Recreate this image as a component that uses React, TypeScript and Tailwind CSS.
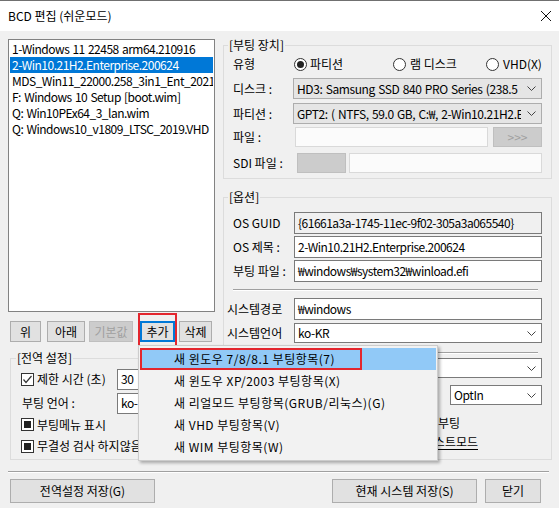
import React from "react";

const entries = [
  "1-Windows 11 22458 arm64.210916",
  "2-Win10.21H2.Enterprise.200624",
  "MDS_Win11_22000.258_3in1_Ent_2021.10.14",
  "F: Windows 10 Setup [boot.wim]",
  "Q: Win10PEx64_3_lan.wim",
  "Q: Windows10_v1809_LTSC_2019.VHD",
];

const menuItems = [
  "새 윈도우 7/8/8.1 부팅항목(7)",
  "새 윈도우 XP/2003 부팅항목(X)",
  "새 리얼모드 부팅항목(GRUB/리눅스)(G)",
  "새 VHD 부팅항목(V)",
  "새 WIM 부팅항목(W)",
];

function Chevron() {
  return (
    <svg width="9" height="5" viewBox="0 0 9 5" className="shrink-0">
      <polyline points="0.5,0.5 4.5,4.5 8.5,0.5" fill="none" stroke="#444" strokeWidth="1" />
    </svg>
  );
}

function Btn({
  children,
  className = "",
  disabled,
  focused,
}: {
  children: React.ReactNode;
  className?: string;
  disabled?: boolean;
  focused?: boolean;
}) {
  const look = disabled
    ? "bg-[#cccccc] border border-[#bfbfbf] text-[#a0a0a0]"
    : focused
      ? "bg-[#e1e1e1] border-2 border-[#0078d7] text-black"
      : "bg-[#e1e1e1] border border-[#adadad] text-black";
  return (
    <div className={`flex shrink-0 items-center justify-center text-[12px] ${look} ${className}`}>
      {children}
    </div>
  );
}

function TextBox({
  value = "",
  className = "",
  readOnly,
}: {
  value?: string;
  className?: string;
  readOnly?: boolean;
}) {
  return (
    <div
      className={`flex min-w-0 items-center overflow-hidden whitespace-nowrap border border-[#7a7a7a] pl-[3px] text-[12px] tracking-[-0.5px] [word-spacing:1px] ${
        readOnly ? "bg-[#f0f0f0]" : "bg-white"
      } ${className}`}
    >
      {value}
    </div>
  );
}

function Combo({
  value,
  className = "",
  gray,
}: {
  value: string;
  className?: string;
  gray?: boolean;
}) {
  return (
    <div
      className={`flex min-w-0 items-center border text-[12px] ${
        gray ? "border-[#adadad] bg-[#e5e5e5]" : "border-[#7a7a7a] bg-white"
      } ${className}`}
    >
      <div className="min-w-0 flex-1 overflow-hidden whitespace-nowrap pl-[3px] tracking-[-0.4px] [word-spacing:1px]">
        {value}
      </div>
      <div className="flex w-[20px] shrink-0 justify-center">
        <Chevron />
      </div>
    </div>
  );
}

function Check({ mode }: { mode: "checked" | "filled" | "empty" }) {
  return (
    <div className="flex h-[13px] w-[13px] shrink-0 items-center justify-center border border-[#333333] bg-white">
      {mode === "checked" && (
        <svg width="11" height="11" viewBox="0 0 11 11">
          <polyline points="1.5,5.5 4,8.5 9.5,2" fill="none" stroke="#333" strokeWidth="1.2" />
        </svg>
      )}
      {mode === "filled" && <div className="h-[7px] w-[7px] bg-[#222222]" />}
    </div>
  );
}

function Radio({ on }: { on?: boolean }) {
  return (
    <div className="flex h-[13px] w-[13px] shrink-0 items-center justify-center rounded-full border border-[#333333] bg-white">
      {on && <div className="h-[7px] w-[7px] rounded-full bg-[#222222]" />}
    </div>
  );
}

function Sep({ className = "" }: { className?: string }) {
  return <div className={`h-[2px] border-t border-b border-t-[#a0a0a0] border-b-white ${className}`} />;
}

export default function App() {
  return (
    <div className="relative h-[508px] w-[559px] overflow-hidden bg-[#f0f0f0] font-['Noto_Sans_CJK_KR','Noto_Sans',sans-serif] text-[12px] leading-[16px] text-black">
      {/* title bar */}
      <div className="flex h-[31px] items-center justify-between border-t border-[#707070] bg-white pl-[8px] pr-[7px]">
        <span className="text-[12px]">BCD 편집 (쉬운모드)</span>
        <svg width="12" height="12" viewBox="0 0 12 12">
          <path d="M1 1 L11 11 M11 1 L1 11" stroke="#111" strokeWidth="1" />
        </svg>
      </div>

      <div className="flex px-[8px]">
        {/* left column */}
        <div className="w-[207px] shrink-0 pt-[8px]">
          <div className="h-[273px] border border-[#828282] bg-white p-px">
            {entries.map((e, i) => (
              <div
                key={e}
                className={`h-[16px] overflow-hidden whitespace-nowrap pl-[2px] leading-[16px] tracking-[-0.5px] [word-spacing:1px] ${
                  i === 1 ? "bg-[#0078d7] text-white" : ""
                }`}
              >
                {e}
              </div>
            ))}
          </div>

          <div className="mt-[9px] flex h-[21px] pl-[2px]">
            <Btn className="w-[31px]">위</Btn>
            <Btn className="ml-[6px] w-[38px]">아래</Btn>
            <Btn className="ml-[4px] w-[44px]" disabled>
              기본값
            </Btn>
            <Btn className="ml-[7px] w-[35px]" focused>
              추가
            </Btn>
            <Btn className="ml-[4px] w-[33px]">삭제</Btn>
          </div>

          <fieldset className="ml-[2px] mt-[8px] w-[205px] min-w-0 border border-[#dcdcdc] pb-[2px] pl-[10px]">
            <legend className="-ml-[5px] px-[1px] leading-[16px]">[전역 설정]</legend>
            <div className="mt-[2px] flex h-[22px] items-center">
              <Check mode="checked" />
              <span className="ml-[3px] whitespace-nowrap">제한 시간 (초)</span>
              <TextBox value="30" className="ml-auto h-[21px] w-[97px]" />
            </div>
            <div className="mt-[2px] flex h-[22px] items-center">
              <span className="ml-[1px] whitespace-nowrap">부팅 언어 :</span>
              <TextBox value="ko-KR" className="ml-auto h-[21px] w-[97px]" />
            </div>
            <div className="flex h-[21px] items-center">
              <Check mode="filled" />
              <span className="ml-[3px]">부팅메뉴 표시</span>
            </div>
            <div className="flex h-[22px] items-center">
              <Check mode="filled" />
              <span className="ml-[3px] whitespace-nowrap">무결성 검사 하지않음</span>
            </div>
          </fieldset>
        </div>

        {/* right column */}
        <div className="ml-[8px] w-[329px] shrink-0 pt-[6px]">
          <fieldset className="min-w-0 border border-[#dcdcdc] pb-[5px] pl-[9px] pr-[9px]">
            <legend className="-ml-[5px] px-[1px] leading-[16px]">[부팅 장치]</legend>
            <div className="mt-[1px] flex h-[20px] items-center">
              <span className="w-[61px]">유형</span>
              <Radio on />
              <span className="ml-[3px] w-[83px]">파티션</span>
              <Radio />
              <span className="ml-[4px] w-[76px]">램 디스크</span>
              <Radio />
              <span className="ml-[4px]">VHD(X)</span>
            </div>
            <div className="mt-[4px] flex h-[21px] items-center">
              <span className="w-[60px] shrink-0">디스크 :</span>
              <Combo gray value="HD3: Samsung SSD 840 PRO Series (238.5 GB, GPT)" className="h-[21px] flex-1" />
            </div>
            <div className="mt-[4px] flex h-[21px] items-center">
              <span className="w-[60px] shrink-0">파티션 :</span>
              <Combo
                gray
                value="GPT2: ( NTFS,  59.0 GB, C:₩, 2-Win10.21H2.Enterprise.200624 )"
                className="h-[21px] flex-1"
              />
            </div>
            <div className="mt-[3px] flex h-[20px] items-center">
              <span className="w-[62px] shrink-0">파일 :</span>
              <div className="h-[20px] min-w-0 flex-1 border border-[#d9d9d9] bg-[#fbfbfb]" />
              <Btn disabled className="ml-[5px] h-[20px] w-[49px]">
                &gt;&gt;&gt;
              </Btn>
            </div>
            <div className="mt-[6px] flex h-[20px] items-center">
              <span className="w-[64px] shrink-0 whitespace-nowrap">SDI 파일 :</span>
              <div className="h-[20px] w-[49px] shrink-0 border border-[#bfbfbf] bg-[#cccccc]" />
              <div className="ml-[3px] h-[20px] min-w-0 flex-1 border border-[#d9d9d9] bg-[#fbfbfb]" />
            </div>
          </fieldset>

          <fieldset className="mt-[10px] min-w-0 border border-[#dcdcdc] pb-[8px] pl-[9px] pr-[9px]">
            <legend className="-ml-[5px] px-[1px] leading-[16px]">[옵션]</legend>
            <div className="mt-[7px] flex h-[22px] items-center">
              <span className="w-[61px] shrink-0">OS GUID</span>
              <TextBox readOnly value="{61661a3a-1745-11ec-9f02-305a3a065540}" className="h-[22px] flex-1" />
            </div>
            <div className="mt-[2px] flex h-[22px] items-center">
              <span className="w-[61px] shrink-0">OS 제목 :</span>
              <TextBox value="2-Win10.21H2.Enterprise.200624" className="h-[22px] flex-1" />
            </div>
            <div className="mt-[2px] flex h-[22px] items-center">
              <span className="w-[61px] shrink-0 whitespace-nowrap">부팅 파일 :</span>
              <TextBox value="₩windows₩system32₩winload.efi" className="h-[22px] flex-1" />
            </div>
            <Sep className="mr-[4px] mt-[7px]" />
            <div className="-ml-[6px] mt-[7px] flex h-[22px] items-center">
              <span className="w-[67px] shrink-0">시스템경로</span>
              <TextBox value="₩windows" className="h-[22px] flex-1" />
            </div>
            <div className="-ml-[6px] mt-[3px] flex h-[20px] items-center">
              <span className="w-[67px] shrink-0">시스템언어</span>
              <Combo value="ko-KR" className="h-[20px] flex-1" />
            </div>
            <Sep className="mr-[4px] mt-[9px]" />
            <div className="mt-[4px] flex h-[20px] items-center">
              <span className="w-[61px] shrink-0">부팅 방식</span>
              <Combo value="" className="h-[20px] flex-1" />
            </div>
            <div className="mt-[7px] flex h-[20px] items-center">
              <span>DEP 설정 (NX)</span>
              <Combo value="OptIn" className="ml-auto h-[20px] w-[92px] shrink-0" />
            </div>
            <div className="mt-[9px] flex h-[18px] w-[227px] items-center justify-between">
              <Check mode="empty" />
              <span>안전모드로 부팅</span>
            </div>
            <div className="mt-[1px] flex h-[18px] w-[245px] items-center justify-between">
              <Check mode="empty" />
              <span className="underline underline-offset-2">테스트모드</span>
            </div>
          </fieldset>
        </div>
      </div>

      {/* bottom */}
      <Sep className="mx-[8px] mt-[11px] w-[541px]" />
      <div className="mt-[6px] flex h-[24px] pl-[10px] pr-[18px]">
        <Btn className="w-[145px]">전역설정 저장(G)</Btn>
        <Btn className="ml-auto w-[145px]">현재 시스템 저장(S)</Btn>
        <Btn className="ml-[8px] w-[56px]">닫기</Btn>
      </div>

      {/* annotation around the add button */}
      <div className="absolute left-[138px] top-[313px] h-[34px] w-[39px] border-2 border-[#e3262e]" />

      {/* context menu */}
      <div className="absolute left-[138px] top-[345px] h-[116px] w-[300px] border border-[#cccccc] bg-[#f2f2f2] pt-[2px] shadow-[2px_2px_3px_rgba(0,0,0,0.3)]">
        {menuItems.map((m, i) => (
          <div
            key={m}
            className={`relative mx-px flex h-[22px] items-center whitespace-nowrap pl-[34px] tracking-[0.5px] ${
              i === 0 ? "bg-[#91c9f7]" : ""
            }`}
          >
            {m}
            {i === 0 && (
              <div className="absolute left-0 top-0 h-[22px] w-[222px] border-2 border-[#e3262e]" />
            )}
          </div>
        ))}
      </div>
    </div>
  );
}
